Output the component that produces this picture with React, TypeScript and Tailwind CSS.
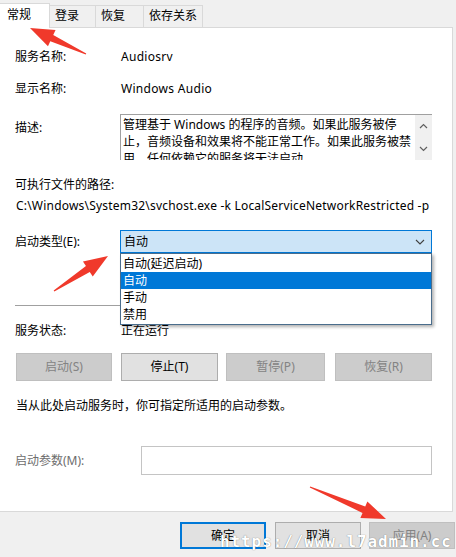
import React from "react"

const tabs = ["常规", "登录", "恢复", "依存关系"]
const tabWidths = ["w-[50px]", "w-[46px]", "w-[48px]", "w-[59px]"]

const options = ["自动(延迟启动)", "自动", "手动", "禁用"]

// red annotation arrow: thin tail widening into a triangular head
function arrowPoints(x1: number, y1: number, x2: number, y2: number) {
  const dx = x2 - x1
  const dy = y2 - y1
  const len = Math.hypot(dx, dy)
  const ux = dx / len
  const uy = dy / len
  const nx = -uy
  const ny = ux
  const head = 24
  const bx = x2 - ux * head
  const by = y2 - uy * head
  const pts: [number, number][] = [
    [x1 + nx * 0.6, y1 + ny * 0.6],
    [bx + nx * 3.5, by + ny * 3.5],
    [bx + nx * 9, by + ny * 9],
    [x2, y2],
    [bx - nx * 9, by - ny * 9],
    [bx - nx * 3.5, by - ny * 3.5],
    [x1 - nx * 0.6, y1 - ny * 0.6],
  ]
  return pts.map((p) => p.join(",")).join(" ")
}

function Chevron({ up }: { up?: boolean }) {
  return (
    <svg width="9" height="6" viewBox="0 0 9 6" className="block">
      <path
        d={up ? "M1 5 L4.5 1.5 L8 5" : "M1 1 L4.5 4.5 L8 1"}
        fill="none"
        stroke="#606060"
        strokeWidth="1.2"
      />
    </svg>
  )
}

function PanelButton({ label, w, enabled }: { label: string; w: string; enabled?: boolean }) {
  return (
    <div
      className={`${w} h-[28px] flex items-center justify-center border ${
        enabled ? "bg-[#e1e1e1] border-[#adadad] text-black" : "bg-[#cccccc] border-[#bfbfbf] text-[#838383]"
      }`}
    >
      {label}
    </div>
  )
}

export default function App() {
  return (
    <div className="relative w-[456px] h-[557px] overflow-hidden bg-[#f0f0f0] text-[12px] leading-[16px] text-black font-['Noto_Sans','Noto_Sans_CJK_SC',sans-serif]">
      {/* tab strip */}
      <div className="flex items-end h-[27px] pt-[3px]">
        {tabs.map((t, i) =>
          i === 0 ? (
            <div
              key={t}
              className={`${tabWidths[i]} relative z-10 -mb-px h-[25px] bg-white border border-b-0 border-[#d9d9d9] border-l-0 pl-[7px] pt-[3px]`}
            >
              {t}
            </div>
          ) : (
            <div
              key={t}
              className={`${tabWidths[i]} h-[22px] border border-b-0 border-l-0 border-[#d9d9d9] pl-[5px] pt-[2px]`}
            >
              {t}
            </div>
          )
        )}
      </div>

      {/* general page */}
      <div className="w-[453px] h-[485px] bg-white border border-l-0 border-[#d9d9d9] flex flex-col">
        <div className="flex mt-[21px]">
          <div className="w-[121px] pl-[15px]">服务名称:</div>
          <div className="tracking-[0.3px]">Audiosrv</div>
        </div>
        <div className="flex mt-[16px]">
          <div className="w-[121px] pl-[15px]">显示名称:</div>
          <div className="tracking-[0.3px]">Windows Audio</div>
        </div>
        <div className="flex mt-[17px]">
          <div className="w-[120px] pl-[15px] pt-[6px]">描述:</div>
          <div className="w-[312px] h-[46px] flex border-t border-l border-[#a0a0a0]">
            <div className="flex-1 h-full overflow-hidden pl-[2px] pt-[1px] leading-[17px]">
              管理基于 Windows 的程序的音频。如果此服务被停止，音频设备和效果将不能正常工作。如果此服务被禁用，任何依赖它的服务将无法启动。
            </div>
            <div className="w-[17px] h-full bg-[#f0f0f0] flex flex-col items-center justify-between py-[8px]">
              <Chevron up />
              <Chevron />
            </div>
          </div>
        </div>
        <div className="mt-[17px] pl-[15px]">可执行文件的路径:</div>
        <div className="mt-[5px] pl-[16px] whitespace-nowrap tracking-[0.2px]">
          C:\Windows\System32\svchost.exe -k LocalServiceNetworkRestricted -p
        </div>
        <div className="flex items-center mt-[16px]">
          <div className="w-[120px] pl-[15px]">启动类型(E):</div>
          <div className="relative w-[312px] h-[23px] bg-[#cce4f7] border border-[#0078d7] flex items-center justify-between pl-[3px] pr-[6px]">
            <span>自动</span>
            <svg width="10" height="6" viewBox="0 0 10 6">
              <path d="M1 1 L5 5 L9 1" fill="none" stroke="#404040" strokeWidth="1.1" />
            </svg>
            {/* open drop-down list */}
            <div className="absolute left-[-1px] top-[22px] w-[312px] z-20 bg-white border border-[#4a6d8c] shadow-[2px_2px_3px_rgba(0,0,0,0.3)] py-px">
              {options.map((o) => (
                <div
                  key={o}
                  className={`h-[17px] pl-[2px] leading-[17px] ${o === "自动" ? "bg-[#0078d7] text-white" : ""}`}
                >
                  {o}
                </div>
              ))}
            </div>
          </div>
        </div>
        <div className="mt-[52px] ml-[15px] w-[417px] h-px bg-[#a0a0a0]" />
        <div className="flex mt-[17px]">
          <div className="w-[121px] pl-[15px]">服务状态:</div>
          <div>正在运行</div>
        </div>
        <div className="flex mt-[14px] pl-[16px]">
          <PanelButton label="启动(S)" w="w-[96px]" />
          <div className="w-[9px]" />
          <PanelButton label="停止(T)" w="w-[97px]" enabled />
          <div className="w-[8px]" />
          <PanelButton label="暂停(P)" w="w-[99px]" />
          <div className="w-[10px]" />
          <PanelButton label="恢复(R)" w="w-[97px]" />
        </div>
        <div className="mt-[17px] pl-[16px]">当从此处启动服务时，你可指定所适用的启动参数。</div>
        <div className="flex items-center mt-[32px]">
          <div className="w-[141px] pl-[15px] text-[#6d6d6d]">启动参数(M):</div>
          <div className="w-[291px] h-[29px] border border-[#c4c4c4] bg-white" />
        </div>
      </div>

      {/* dialog buttons */}
      <div className="flex mt-[10px] pl-[180px]">
        <div className="w-[86px] h-[27px] border-2 border-[#0078d7] bg-[#e1e1e1] flex items-center justify-center">
          确定
        </div>
        <div className="w-[9px]" />
        <div className="w-[86px] h-[27px] border border-[#adadad] bg-[#e1e1e1] flex items-center justify-center">
          取消
        </div>
        <div className="w-[8px]" />
        <div className="w-[86px] h-[27px] border border-[#bfbfbf] bg-[#cccccc] text-[#838383] flex items-center justify-center">
          应用(A)
        </div>
      </div>

      {/* annotations */}
      <svg className="absolute inset-0 z-30 pointer-events-none" width="456" height="557">
        <polygon points={arrowPoints(86, 54, 30, 28)} fill="#f0392b" />
        <polygon points={arrowPoints(54, 291, 108, 256)} fill="#f0392b" />
        <polygon points={arrowPoints(310, 487, 386, 519)} fill="#f0392b" />
      </svg>
      <div className="absolute left-[220px] top-[532px] z-40 text-white font-bold text-[16px] leading-[20px] tracking-[0.9px] font-['DejaVu_Sans_Mono',monospace] [text-shadow:0_0_1px_rgba(0,0,0,0.55)] whitespace-nowrap">
        https://www.l7admin.cc
      </div>
    </div>
  )
}
